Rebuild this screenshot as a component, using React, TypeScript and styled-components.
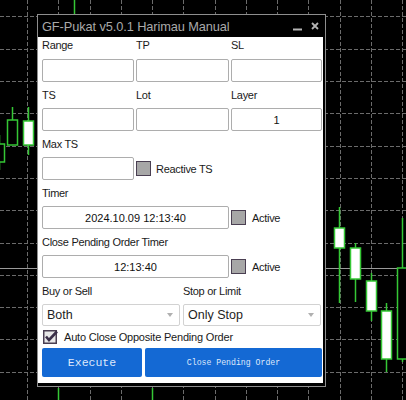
import styled, { createGlobalStyle } from "styled-components";

const GlobalStyle = createGlobalStyle`
    html, body {
        margin: 0;
        padding: 0;
        background: #000;
    }
`;

const Screen = styled.div`
    position: relative;
    width: 406px;
    height: 400px;
    overflow: hidden;
    background: #000;
    font-family: "Liberation Sans", Arial, sans-serif;
`;

const ChartLayer = styled.svg`
    position: absolute;
    inset: 0;
`;

const Window = styled.div`
    position: absolute;
    left: 37px;
    top: 14px;
    width: 289px;
    height: 373px;
    box-sizing: border-box;
    border: 1px solid #8e8e8e;
    background: #000;
    display: flex;
    flex-direction: column;
`;

const TitleBar = styled.div`
    height: 22px;
    display: flex;
    align-items: center;
    padding: 0 6px 0 4px;
    color: #a9a9a9;
    font-size: 12.8px;
`;

const TitleText = styled.span`
    flex: 1;
    padding-top: 1px;
    letter-spacing: -0.1px;
`;

const TitleControls = styled.div`
    display: flex;
    align-items: center;
    gap: 9px;
`;

const Body = styled.div`
    flex: 1;
    background: #fff;
    margin: 0 2px 3px 0;
    padding: 0 1px 6px 4px;
    display: flex;
    flex-direction: column;
`;

const Grid3 = styled.div<{ $cols?: string }>`
    display: grid;
    grid-template-columns: ${({ $cols }) => $cols ?? "92px 93px 91px"};
    column-gap: 2px;
`;

const Label = styled.div<{ $first?: boolean }>`
    height: ${({ $first }) => ($first ? "22px" : "26px")};
    line-height: ${({ $first }) => ($first ? "17px" : "26px")};
    font-size: 11px;
    letter-spacing: -0.3px;
    color: #1a1a1a;
    white-space: nowrap;
`;

const Field = styled.div<{ $w?: number }>`
    box-sizing: border-box;
    height: 23px;
    width: ${({ $w }) => ($w ? `${$w}px` : "auto")};
    border: 1px solid #adadad;
    border-radius: 2px;
    background: #fff;
    display: flex;
    align-items: center;
    justify-content: center;
    font-size: 11px;
    color: #111;
`;

const Row = styled.div`
    display: flex;
    align-items: center;
    gap: 2px;
`;

const Box = styled.div`
    box-sizing: border-box;
    width: 15px;
    height: 15px;
    background: #a7a7a7;
    border: 1.5px solid #4a3f52;
`;

const BoxText = styled.span<{ $gap: number }>`
    margin-left: ${({ $gap }) => $gap}px;
    font-size: 11px;
    letter-spacing: -0.3px;
    color: #1a1a1a;
`;

const Selects = styled.div`
    display: grid;
    grid-template-columns: 138px 138px;
    column-gap: 3px;
`;

const Select = styled.div`
    box-sizing: border-box;
    height: 22px;
    border: 1px solid #d2d2d2;
    border-radius: 2px;
    display: flex;
    align-items: center;
    justify-content: space-between;
    padding: 0 6px 0 4px;
    font-size: 12.5px;
    color: #1e1e1e;
`;

const Arrow = styled.span`
    width: 0;
    height: 0;
    border-left: 3.5px solid transparent;
    border-right: 3.5px solid transparent;
    border-top: 4px solid #b0b0b0;
`;

const CheckRow = styled.div`
    height: 22px;
    display: flex;
    align-items: center;
    gap: 5px;
    padding-left: 1px;
    font-size: 11px;
    letter-spacing: -0.2px;
    color: #1a1a1a;
`;

const Buttons = styled.div`
    display: grid;
    grid-template-columns: 100px 177px;
    column-gap: 3px;
`;

const ActionButton = styled.button<{ $size: number }>`
    height: 29px;
    border: 0;
    border-radius: 2px;
    background: #1469d4;
    color: #dfe8fb;
    font-family: "Liberation Mono", "Courier New", monospace;
    font-size: ${({ $size }) => $size}px;
    padding: 0;
    cursor: pointer;
`;

const hLines = [16, 49, 81, 113, 146, 178, 210, 243, 275, 307, 339, 372];
const vLines = Array.from({ length: 13 }, (_, i) => Math.round(27 + i * 31.25));

type Candle = { x: number; top: number; bottom: number; hi: number; lo: number; bull: boolean };

const candles: Candle[] = [
	{ x: -1, top: 144, bottom: 162, hi: 135, lo: 170, bull: false },
	{ x: 12, top: 120, bottom: 145, hi: 107, lo: 145, bull: false },
	{ x: 28, top: 121, bottom: 145, hi: 107, lo: 155, bull: true },
	{ x: 339, top: 228, bottom: 248, hi: 207, lo: 303, bull: true },
	{ x: 355, top: 248, bottom: 279, hi: 243, lo: 302, bull: true },
	{ x: 371, top: 281, bottom: 311, hi: 273, lo: 321, bull: true },
	{ x: 386, top: 311, bottom: 359, hi: 303, lo: 372, bull: true },
	{ x: 402, top: 268, bottom: 359, hi: 218, lo: 362, bull: false },
];

function Chart() {
	return (
		<ChartLayer width={406} height={400}>
			{hLines.map((y) => (
				<line key={`h${y}`} x1={0} x2={406} y1={y + 0.5} y2={y + 0.5} stroke="#6b6b6b" strokeDasharray="4 2" />
			))}
			{vLines.map((x) => (
				<line key={`v${x}`} x1={x + 0.5} x2={x + 0.5} y1={0} y2={400} stroke="#6b6b6b" strokeDasharray="4 2" />
			))}
			<line x1={0} x2={406} y1={268.5} y2={268.5} stroke="#9a9a9a" />
			<line x1={74.5} x2={74.5} y1={0} y2={14} stroke="#35c735" strokeWidth={1.5} />
			<line x1={58.5} x2={58.5} y1={388} y2={400} stroke="#35c735" strokeWidth={1.5} />
			<line x1={152.5} x2={152.5} y1={388} y2={400} stroke="#35c735" strokeWidth={1.5} />
			{candles.map((c) => (
				<g key={c.x}>
					<line x1={c.x + 0.5} x2={c.x + 0.5} y1={c.hi} y2={c.lo} stroke="#35c735" strokeWidth={1.5} />
					<rect
						x={c.x - 4.5}
						y={c.top}
						width={10}
						height={c.bottom - c.top}
						fill={c.bull ? "#fff" : "#000"}
						stroke="#35c735"
						strokeWidth={1.5}
					/>
				</g>
			))}
		</ChartLayer>
	);
}

function CheckedBox() {
	return (
		<svg width={16} height={14} viewBox="0 0 16 14">
			<rect x={0.75} y={0.75} width={12.5} height={12.5} fill="#e8e8e8" stroke="#4a3f52" strokeWidth={1.5} />
			<path d="M3 6.5 L6 10 L14 1.5" fill="none" stroke="#3b2f49" strokeWidth={2.6} />
		</svg>
	);
}

export default function App() {
	return (
		<>
			<GlobalStyle />
			<Screen>
				<Chart />
				<Window>
					<TitleBar>
						<TitleText>GF-Pukat v5.0.1 Harimau Manual</TitleText>
						<TitleControls>
							<svg width={9} height={10} viewBox="0 0 9 10">
								<line x1={0} x2={9} y1={8.5} y2={8.5} stroke="#b4b4b4" strokeWidth={2} />
							</svg>
							<svg width={8} height={8} viewBox="0 0 8 8">
								<path d="M1 1 L7 7 M7 1 L1 7" stroke="#b4b4b4" strokeWidth={1.8} />
							</svg>
						</TitleControls>
					</TitleBar>
					<Body>
						<Grid3>
							<Label $first>Range</Label>
							<Label $first>TP</Label>
							<Label $first>SL</Label>
							<Field />
							<Field />
							<Field />
							<Label>TS</Label>
							<Label>Lot</Label>
							<Label>Layer</Label>
							<Field />
							<Field />
							<Field>1</Field>
						</Grid3>
						<Label>Max TS</Label>
						<Row>
							<Field $w={92} />
							<Box />
							<BoxText $gap={3}>Reactive TS</BoxText>
						</Row>
						<Label>Timer</Label>
						<Row>
							<Field $w={187}>2024.10.09 12:13:40</Field>
							<Box />
							<BoxText $gap={4}>Active</BoxText>
						</Row>
						<Label>Close Pending Order Timer</Label>
						<Row>
							<Field $w={187}>12:13:40</Field>
							<Box />
							<BoxText $gap={4}>Active</BoxText>
						</Row>
						<Grid3 $cols="139px 138px">
							<Label>Buy or Sell</Label>
							<Label>Stop or Limit</Label>
						</Grid3>
						<Selects>
							<Select>
								<span>Both</span>
								<Arrow />
							</Select>
							<Select>
								<span>Only Stop</span>
								<Arrow />
							</Select>
						</Selects>
						<CheckRow>
							<CheckedBox />
							<span>Auto Close Opposite Pending Order</span>
						</CheckRow>
						<Buttons>
							<ActionButton $size={11.5}>Execute</ActionButton>
							<ActionButton $size={8.2}>Close Pending Order</ActionButton>
						</Buttons>
					</Body>
				</Window>
			</Screen>
		</>
	);
}
